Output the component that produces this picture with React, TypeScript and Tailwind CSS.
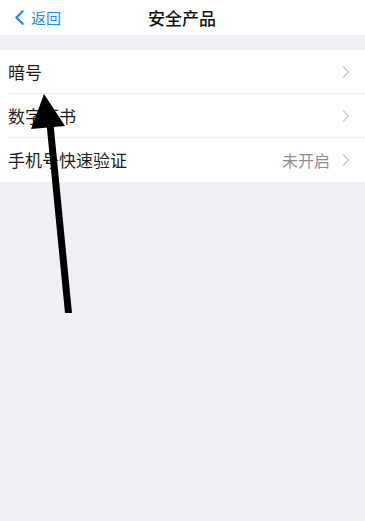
import { ChevronLeft, ChevronRight } from "lucide-react";

const rows = [
  { label: "暗号", value: "" },
  { label: "数字证书", value: "" },
  { label: "手机号快速验证", value: "未开启" },
];

export default function App() {
  return (
    <div
      className="relative w-[365px] h-[521px] overflow-hidden bg-[#efeff4]"
      style={{ fontFamily: '"Noto Sans CJK SC", "Noto Sans", sans-serif' }}
    >
      {/* nav bar */}
      <div className="relative h-[35px] bg-white flex items-center">
        <div className="flex items-center pl-[7px] text-[#1a8cf0]">
          <ChevronLeft size={25} strokeWidth={2.2} className="-mr-[1px]" />
          <span className="text-[15px] leading-none">返回</span>
        </div>
        <div className="absolute left-0 right-0 top-0 h-full flex items-center justify-center pointer-events-none">
          <span className="text-[17px] font-medium text-[#111] ml-[-1px]">安全产品</span>
        </div>
      </div>

      <div className="h-[15px]" />

      {/* list */}
      <div className="bg-white">
        {rows.map((r, i) => (
          <div key={r.label} className="pl-[8px]">
            <div
              className={
                "h-[44px] flex items-center pr-[9px] " +
                (i < rows.length - 1 ? "border-b border-[#ececec]" : "")
              }
            >
              <span className="flex-1 text-[17px] text-[#1c1c1c]">{r.label}</span>
              {r.value && <span className="text-[16px] text-[#8e8e93] mr-[6px]">{r.value}</span>}
              <ChevronRight size={20} strokeWidth={1.4} className="text-[#c4c4c8]" />
            </div>
          </div>
        ))}
      </div>

      {/* annotation arrow */}
      <svg className="absolute left-0 top-0" width="365" height="521" viewBox="0 0 365 521">
        <polygon points="46.5,124 53.5,124 72,313 65,313" fill="#000" />
        <polygon points="44,94 31,129 65,126" fill="#000" />
      </svg>
    </div>
  );
}
